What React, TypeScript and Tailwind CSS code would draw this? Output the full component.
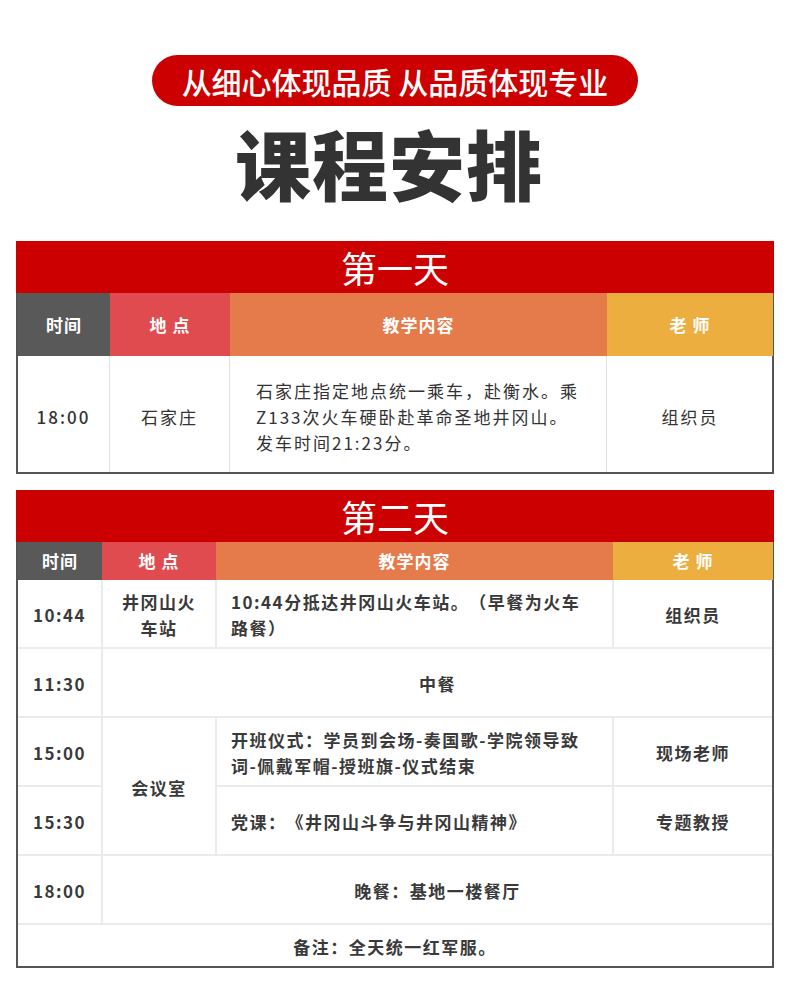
import React from "react";

const font = { fontFamily: '"Noto Sans CJK SC", "Noto Sans", sans-serif' };

function DayBar({ title }: { title: string }) {
  return (
    <div className="flex h-[52px] items-center justify-center bg-[#cc0000] text-[36px] leading-none text-white">
      {title}
    </div>
  );
}

function HeadCell({ children, className }: { children: React.ReactNode; className: string }) {
  return (
    <div className={"flex items-center justify-center text-[17px] font-bold tracking-[1px] text-white " + className}>
      {children}
    </div>
  );
}

function DayOne() {
  return (
    <div className="mx-[16px]">
      <DayBar title="第一天" />
      <div className="border-x-2 border-b-2 border-[#555]">
        <div className="grid h-[63px] grid-cols-[92px_120px_377px_166px]">
          <HeadCell className="bg-[#595959]">时间</HeadCell>
          <HeadCell className="bg-[#e04b4f]">地 点</HeadCell>
          <HeadCell className="bg-[#e57a4b]">教学内容</HeadCell>
          <HeadCell className="bg-[#ecae3f]">老 师</HeadCell>
        </div>
        <div className="grid h-[116px] grid-cols-[92px_120px_377px_166px] text-[17px] tracking-[2px] text-[#333] [text-spacing-trim:space-all]">
          <div className="flex items-center justify-center border-r border-[#e2e2e2] pt-[6px] font-medium">18:00</div>
          <div className="flex items-center justify-center border-r border-[#e2e2e2] pt-[6px]">石家庄</div>
          <div className="flex items-center border-r border-[#e2e2e2] pl-[26px] pt-[6px] leading-[26px]">
            <span>
              石家庄指定地点统一乘车，赴衡水。乘
              <br />
              Z133次火车硬卧赴革命圣地井冈山。
              <br />
              发车时间21:23分。
            </span>
          </div>
          <div className="flex items-center justify-center pt-[6px]">组织员</div>
        </div>
      </div>
    </div>
  );
}

function Cell({ children, className = "" }: { children: React.ReactNode; className?: string }) {
  return <div className={"flex items-center bg-white pt-[3px] " + className}>{children}</div>;
}

function DayTwo() {
  return (
    <div className="mx-[16px]">
      <DayBar title="第二天" />
      <div className="border-x-2 border-b-2 border-[#555]">
        <div className="grid h-[38px] grid-cols-[84px_114px_397px_160px]">
          <HeadCell className="bg-[#595959]">时间</HeadCell>
          <HeadCell className="bg-[#e04b4f]">地 点</HeadCell>
          <HeadCell className="bg-[#e57a4b]">教学内容</HeadCell>
          <HeadCell className="bg-[#ecae3f]">老 师</HeadCell>
        </div>
        <div className="grid grid-cols-[83px_112px_395px_1fr] grid-rows-[67px_67px_67px_67px_67px_41px] gap-[2px] bg-[#ebebeb] text-[17px] font-bold tracking-[1.5px] text-[#3a3a3a] [text-spacing-trim:space-all]">
          <Cell className="justify-center">10:44</Cell>
          <Cell className="justify-center text-center leading-[26px]">
            <span>
              井冈山火
              <br />
              车站
            </span>
          </Cell>
          <Cell className="pl-[14px] leading-[26px]">
            <span>
              10:44分抵达井冈山火车站。（早餐为火车
              <br />
              路餐）
            </span>
          </Cell>
          <Cell className="justify-center">组织员</Cell>

          <Cell className="justify-center">11:30</Cell>
          <Cell className="col-span-3 justify-center">中餐</Cell>

          <Cell className="justify-center">15:00</Cell>
          <Cell className="row-span-2 justify-center">会议室</Cell>
          <Cell className="pl-[14px] leading-[26px]">
            <span>
              开班仪式：学员到会场-奏国歌-学院领导致
              <br />
              词-佩戴军帽-授班旗-仪式结束
            </span>
          </Cell>
          <Cell className="justify-center">现场老师</Cell>

          <Cell className="justify-center">15:30</Cell>
          <Cell className="pl-[14px]">党课：《井冈山斗争与井冈山精神》</Cell>
          <Cell className="justify-center">专题教授</Cell>

          <Cell className="justify-center">18:00</Cell>
          <Cell className="col-span-3 justify-center">晚餐：基地一楼餐厅</Cell>

          <Cell className="col-span-4 justify-center">备注：全天统一红军服。</Cell>
        </div>
      </div>
    </div>
  );
}

export default function App() {
  return (
    <div className="w-[790px] bg-white pb-[16px]" style={font}>
      <div className="flex justify-center pt-[55px]">
        <div className="flex h-[51px] w-[486px] items-center justify-center rounded-full bg-[#cc0000] text-[30px] font-medium leading-none text-white">
          从细心体现品质 从品质体现专业
        </div>
      </div>
      <div className="mt-[14px] flex h-[84px] items-center justify-center pr-[12px] text-[76px] font-black leading-none tracking-[1px] text-[#333]">
        课程安排
      </div>
      <div className="mt-[37px]">
        <DayOne />
      </div>
      <div className="mt-[16px]">
        <DayTwo />
      </div>
    </div>
  );
}
